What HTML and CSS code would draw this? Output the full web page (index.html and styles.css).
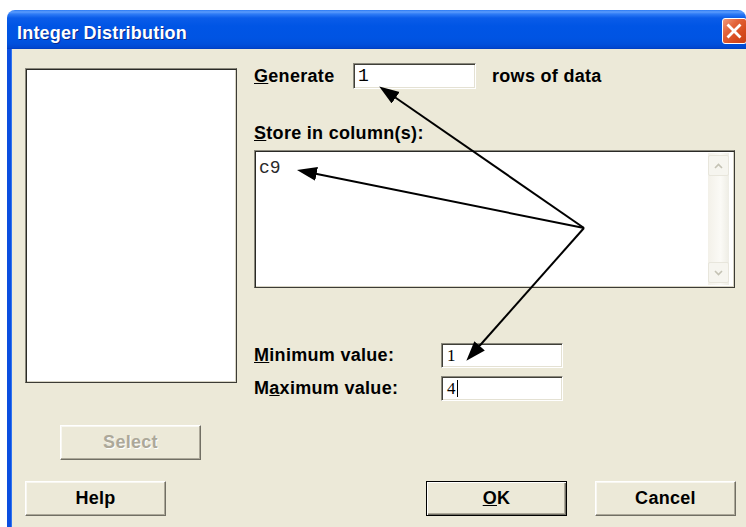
FILE: index.html
```html
<!DOCTYPE html>
<html lang="en">
<head>
<meta charset="utf-8">
<title>Integer Distribution</title>
<link rel="stylesheet" href="styles.css">
</head>
<body>
<div class="window">
  <div class="titlebar">
    <span class="title">Integer Distribution</span>
    <span class="close">
      <svg width="16" height="16" viewBox="0 0 16 16"><path d="M2.5 2.5 L13.5 13.5 M13.5 2.5 L2.5 13.5" stroke="#fff" stroke-width="2.8" stroke-linecap="square"/></svg>
    </span>
  </div>
  <div class="client">
    <div class="body">
      <div class="left">
        <div class="varlist sunken"></div>
        <button class="btn select" disabled>Select</button>
      </div>
      <div class="right">
        <div class="gen-row">
          <span class="gen-label"><u>G</u>enerate</span>
          <span class="field gen-field mono">1</span>
          <span class="gen-suffix">rows of data</span>
        </div>
        <div class="store-label"><u>S</u>tore in column(s):</div>
        <div class="store-box sunken">
          <div class="store-text mono">c9</div>
          <div class="scrollbar">
            <span class="sb-btn">
              <svg width="9" height="6" viewBox="0 0 9 6"><path d="M1 5 L4.5 1.5 L8 5" fill="none" stroke="#c4c2b4" stroke-width="1.6"/></svg>
            </span>
            <span class="sb-btn">
              <svg width="9" height="6" viewBox="0 0 9 6"><path d="M1 1 L4.5 4.5 L8 1" fill="none" stroke="#c4c2b4" stroke-width="1.6"/></svg>
            </span>
          </div>
        </div>
        <div class="range-row min-row">
          <span class="range-label"><u>M</u>inimum value:</span>
          <span class="field range-field serif">1</span>
        </div>
        <div class="range-row max-row">
          <span class="range-label">M<u>a</u>ximum value:</span>
          <span class="field range-field serif">4<span class="caret"></span></span>
        </div>
      </div>
    </div>
    <div class="footer">
      <button class="btn help">Help</button>
      <button class="btn ok default"><u>O</u>K</button>
      <button class="btn cancel">Cancel</button>
    </div>
  </div>
</div>

<svg class="arrows" width="746" height="527" viewBox="0 0 746 527">
  <defs>
    <marker id="head" markerUnits="userSpaceOnUse" markerWidth="22" markerHeight="16" refX="11" refY="7" orient="auto">
      <path d="M0 0 L20 7 L0 14 Z" fill="#000"/>
    </marker>
  </defs>
  <g stroke="#000" stroke-width="2" fill="none">
    <line x1="584" y1="228" x2="386.6" y2="91.5" marker-end="url(#head)"/>
    <line x1="584" y1="228" x2="305.8" y2="171.8" marker-end="url(#head)"/>
    <line x1="584" y1="228" x2="472.3" y2="354" marker-end="url(#head)"/>
  </g>
</svg>
</body>
</html>
```

FILE: styles.css
```css
html, body {
  margin: 0;
  padding: 0;
}

body {
  width: 746px;
  height: 527px;
  overflow: hidden;
  background: #fff;
  position: relative;
  font-family: "Liberation Sans", Arial, sans-serif;
  font-weight: bold;
  font-size: 18px;
  letter-spacing: 0.3px;
  color: #000;
}

/* window frame */
.window {
  margin: 10px 0 0 7px;
  width: 739px;
}

.titlebar {
  height: 39px;
  box-sizing: border-box;
  display: flex;
  align-items: flex-start;
  padding: 13px 0 0 10px;
  border-radius: 8px 8px 0 0;
  background: linear-gradient(to bottom,
    #2a7af5 0px, #5c9cfc 2px, #2f7cf6 4px, #0a5ce9 8px,
    #0055e5 16px, #0054e3 28px, #0050dc 34px, #0046cf 38px, #003ab8 39px);
}

.title {
  color: #fff;
  line-height: 20px;
  letter-spacing: 0.2px;
  text-shadow: 1px 1px 0 #0b2a8c;
}

.close {
  margin: -5px -1px 0 auto;
  width: 25px;
  height: 26px;
  box-sizing: border-box;
  border: 1px solid #fff;
  border-radius: 3px;
  background: linear-gradient(to bottom right, #f09a7c 0%, #e3643b 35%, #d64a1e 70%, #c73e17 100%);
  display: flex;
  align-items: center;
  padding-left: 3px;
}

.close svg {
  display: block;
}

.client {
  background: #ece9d8;
  border-left: 4px solid #0a4ee0;
  box-shadow: inset 1px 0 0 #2f74f0;
  height: 480px;
}

/* main area */
.body {
  display: flex;
  padding-top: 14px;
}

.left {
  margin-left: 14px;
  margin-top: 5px;
  display: flex;
  flex-direction: column;
}

.sunken {
  background: #fff;
  border: 1px solid;
  border-color: #8a887c #3c3b35 #3c3b35 #8a887c;
  box-shadow: inset 1px 1px 0 #2a2a26, inset -1px -1px 0 #d6d3c4;
  box-sizing: border-box;
}

.varlist {
  width: 212px;
  height: 315px;
}

/* buttons */
.btn {
  width: 141px;
  height: 35px;
  box-sizing: border-box;
  background: #ece9d8;
  font: inherit;
  letter-spacing: 0.3px;
  color: #000;
  border: 1px solid;
  border-color: #fff #716f64 #716f64 #fff;
  box-shadow: inset -1px -1px 0 #aca899, inset 1px 1px 0 #f8f7f1;
  padding: 0;
  margin: 0;
}

.btn.default {
  border: 1px solid #000;
  box-shadow: inset 1px 1px 0 #fff, inset -1px -1px 0 #716f64, inset -2px -2px 0 #aca899;
}

.select {
  margin: 42px 0 0 35px;
  color: #aca899;
  text-shadow: 1px 1px 0 #fff;
}

.right {
  margin-left: 17px;
  display: flex;
  flex-direction: column;
}

.gen-row {
  display: flex;
  align-items: center;
  height: 26px;
}

.gen-label {
  width: 99px;
}

.field {
  background: #fff;
  box-sizing: border-box;
  border: 1px solid;
  border-color: #8a887c #fff #fff #8a887c;
  box-shadow: inset 1px 1px 0 #403f38, inset -1px -1px 0 #e4e1d3;
  display: flex;
  align-items: center;
  font-weight: normal;
  letter-spacing: 0;
}

.mono {
  font-family: "Liberation Mono", "Courier New", monospace;
  font-weight: normal;
  letter-spacing: 0;
  color: #2a2a2a;
}

.serif {
  font-family: "Liberation Serif", "Times New Roman", serif;
  font-size: 17px;
}

.gen-field {
  width: 123px;
  height: 26px;
  padding-left: 4px;
  font-size: 18px;
  color: #000;
}

.gen-suffix {
  margin-left: 16px;
}

.store-label {
  margin-top: 34px;
  line-height: 20px;
}

.store-box {
  margin-top: 7px;
  width: 481px;
  height: 138px;
  display: flex;
  justify-content: space-between;
  padding: 2px 5px 2px 3px;
}

.store-text {
  font-size: 18px;
  line-height: 20px;
  padding: 5px 0 0 1px;
}

.scrollbar {
  width: 21px;
  display: flex;
  flex-direction: column;
  justify-content: space-between;
  background: linear-gradient(to right, #f3f1e9, #fbfaf6 60%, #eeede5);
  padding: 2px 0;
}

.sb-btn {
  height: 21px;
  box-sizing: border-box;
  border: 1px solid #e8e6dc;
  border-radius: 2px;
  background: #f6f5ef;
  display: flex;
  align-items: center;
  justify-content: center;
}

.range-row {
  display: flex;
  align-items: center;
}

.min-row {
  margin-top: 55px;
}

.max-row {
  margin-top: 8px;
}

.range-label {
  width: 187px;
}

.range-field {
  width: 122px;
  height: 25px;
  padding-left: 5px;
  color: #000;
}

.caret {
  display: inline-block;
  width: 1px;
  height: 17px;
  background: #000;
  margin-left: 1px;
}

/* bottom buttons */
.footer {
  display: flex;
  margin-top: 21px;
  padding-left: 14px;
}

.ok {
  margin-left: 260px;
}

.cancel {
  margin-left: 28px;
}

/* call-out arrows drawn over the dialog */
.arrows {
  position: absolute;
  left: 0;
  top: 0;
  pointer-events: none;
}
```
